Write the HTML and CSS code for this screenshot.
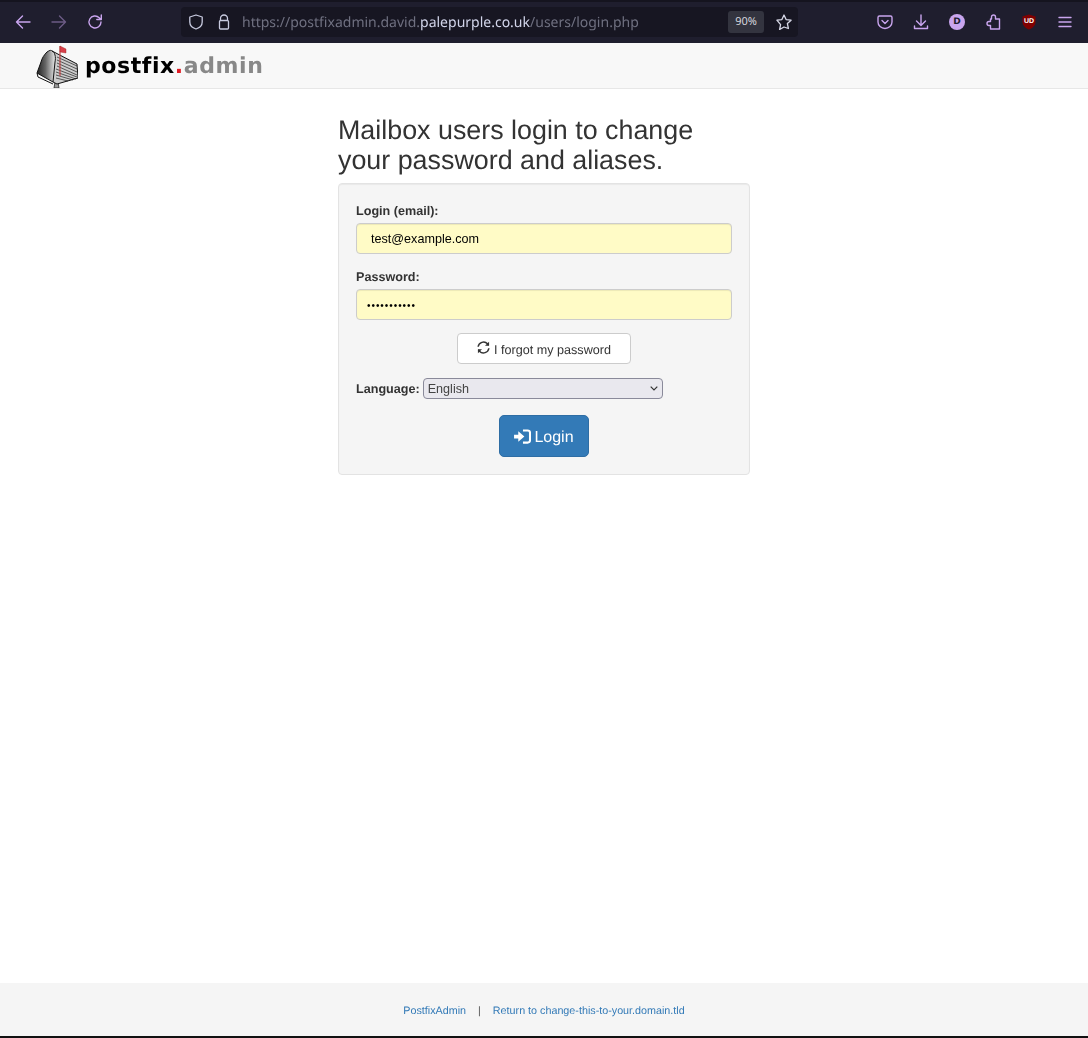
FILE: index.html
```html
<!DOCTYPE html>
<html lang="en">
<head>
<meta charset="utf-8">
<title>Postfix Admin</title>
<link rel="stylesheet" href="styles.css">
</head>
<body>
<header class="toolbar">
  <div class="nav-group">
    <svg class="tb-icon" viewBox="0 0 16 16"><path d="M15 8H1.500M7.500 2L1.500 8l6 6"/></svg>
    <svg class="tb-icon dim" viewBox="0 0 16 16"><path d="M1 8h13.500M8.500 2l6 6-6 6"/></svg>
    <svg class="tb-icon" viewBox="0 0 16 16"><path d="M14 8a6 6 0 1 1-1.800-4.300L14 5.500M14.300 1v4.500H9.800"/></svg>
  </div>
  <div class="urlbar">
    <svg class="url-icon" viewBox="0 0 16 16"><path d="M8 1l6.200 2v5c0 3.600-3 6-6.200 7-3.200-1-6.200-3.400-6.200-7V3z"/></svg>
    <svg class="url-icon lock" viewBox="0 0 16 16"><path d="M4.500 7V4.500a3.500 3.500 0 0 1 7 0V7M3.500 7.500a1 1 0 0 1 1-1h7a1 1 0 0 1 1 1V14a1 1 0 0 1-1 1h-7a1 1 0 0 1-1-1z"/></svg>
    <div class="url-text">https://postfixadmin.david.<span class="url-strong">palepurple.co.uk</span>/users/login.php</div>
    <span class="zoom">90%</span>
    <svg class="star" viewBox="0 0 16 16"><path d="M8 1l2.100 4.600 5 .6-3.700 3.400 1 4.900L8 13l-4.400 2.500 1-4.900L.9 6.200l5-.6z"/></svg>
  </div>
  <div class="ext-group">
    <svg class="tb-icon" viewBox="0 0 16 16"><path d="M2.500 2h11A1.500 1.500 0 0 1 15 3.500V8a7 6.500 0 0 1-14 0V3.500A1.500 1.500 0 0 1 2.500 2zM5 6.500l3 3 3-3"/></svg>
    <svg class="tb-icon" viewBox="0 0 16 16"><path d="M8 1v10M3.500 7L8 11.500 12.500 7M1.500 12v2.500h13V12"/></svg>
    <span class="avatar">D</span>
    <svg class="tb-icon" viewBox="0 0 16 16"><path d="M6.500 5V3a2 2 0 0 1 4 0V5H14.500V15H5.500V11.500H4a2 2 0 0 1 0-4H5.500V5z"/></svg>
    <span class="shield"><svg viewBox="0 0 16 16"><path class="shield-bg" d="M8 .5l6.500 2V8c0 3.500-3 6-6.500 7.500C4.500 14 1.500 11.500 1.500 8V2.500z"/></svg><span class="shield-text">UD</span></span>
    <svg class="tb-icon" viewBox="0 0 16 16"><path d="M2 3.500h12M2 8h12M2 12.500h12"/></svg>
  </div>
</header>

<nav class="navbar">
  <svg class="logo" viewBox="0 0 42 44">
    <defs>
      <linearGradient id="doorGrad" x1="0" y1="0" x2="1" y2="0">
        <stop offset="0" stop-color="#222"/>
        <stop offset=".45" stop-color="#666"/>
        <stop offset=".8" stop-color="#bbb"/>
        <stop offset="1" stop-color="#f4f4f4"/>
      </linearGradient>
    </defs>
    <path class="logo-post" d="M19 38h3l1 6h-5z"/>
    <path class="logo-body" d="M16 7L41 20l1 14-21 6-6-3z"/>
    <path class="logo-lines" d="M21 13l20 9M21 16l20 9M21 19l20 9M21 22l20 9M20 25l21 8M20 28l20 7M20 31l17 5M20 34l12 3"/>
    <path class="logo-door" d="M1 29L5 18c1-4 3-7 6-10 3-2 6-1 8 2 1 3 1 5 0 8l-2 20z"/>
    <path class="logo-outline" d="M1 29L5 18c1-4 3-7 6-10 3-2 4-2 5-1L41 20l1 14-21 6-4-2zM16 7c3 1 4 6 3 11l-2 20M1 29l1 4 15 7"/>
    <path class="logo-pole" d="M24 2v30"/>
    <path class="logo-flag" d="M24 2l6 3v4l-6-1z"/>
  </svg>
  <div class="brand">postfix<span class="brand-dot">.</span><span class="brand-admin">admin</span></div>
</nav>

<main class="content">
  <div class="login-col">
    <h2 class="title">Mailbox users login to change your password and aliases.</h2>
    <form class="well">
      <label class="label" for="email">Login (email):</label>
      <input class="field" id="email" type="text" value="test@example.com">
      <label class="label label-pw" for="pw">Password:</label>
      <input class="field field-pw" id="pw" type="password" value="password123">
      <div class="forgot-row">
        <a class="btn-forgot">
          <svg class="refresh" viewBox="0 0 14 14"><path d="M1.200 6.200A5.900 5.900 0 0 1 11.300 3l1.200 1.500M12.800 7.800A5.900 5.900 0 0 1 2.700 11L1.500 9.500"/><path class="refresh-head" d="M13 .8v4.400H8.600zM1 13.200V8.800h4.400z"/></svg>
          I forgot my password
        </a>
      </div>
      <div class="lang-row">
        <label class="label label-lang" for="lang">Language:</label>
        <span class="lang-wrap">
          <select class="lang" id="lang"><option>English</option></select>
          <svg class="chevron" viewBox="0 0 8 5"><path d="M.7.700L4 4l3.300-3.300"/></svg>
        </span>
      </div>
      <div class="login-row">
        <button class="btn-login" type="button">
          <svg class="login-icon" viewBox="0 0 18 16"><path class="li-arrow" d="M0 6h4.500V2.500L11 8l-6.500 5.500V10H0z"/><path class="li-door" d="M9.500 1.500h5a2.500 2.500 0 0 1 2.500 2.500v8a2.500 2.500 0 0 1-2.500 2.500h-5"/></svg>
          Login
        </button>
      </div>
    </form>
  </div>
</main>

<footer class="footer">
  <div class="foot-inner">
    <a class="foot-link">PostfixAdmin</a>
    <span class="foot-sep">|</span>
    <a class="foot-link">Return to change-this-to-your.domain.tld</a>
  </div>
</footer>
</body>
</html>
```
FILE: styles.css
```css
* { box-sizing: border-box; }
html, body { margin: 0; height: 100%; }
body {
  min-height: 1038px;
  display: flex;
  flex-direction: column;
  background: #fff;
  font-family: "Liberation Sans", Arial, sans-serif;
  color: #333;
  font-size: 12.6px;
  border-bottom: 2px solid #111;
  text-rendering: geometricPrecision;
}

/* browser chrome */
.toolbar {
  height: 43px;
  flex: none;
  display: flex;
  align-items: center;
  background: #1f1e2e;
  border-top: 2px solid #15141f;
  padding: 0 14px 1px 15px;
}
.nav-group { display: flex; gap: 20px; align-items: center; width: 166px; }
.tb-icon {
  width: 16px; height: 16px; flex: none;
  fill: none; stroke: #c9a5ee; stroke-width: 1.400;
  stroke-linecap: round; stroke-linejoin: round;
}
.dim { opacity: .45; }
.urlbar {
  width: 617px;
  height: 30px;
  display: flex;
  align-items: center;
  background: #171622;
  border-radius: 4px;
  padding: 0 6px 0 7px;
  font-family: "Noto Sans", sans-serif;
  font-size: 14px;
  color: #6f7080;
}
.url-icon {
  width: 16px; height: 16px; flex: none; margin-right: 12px;
  fill: none; stroke: #c8cbe0; stroke-width: 1.300; stroke-linejoin: round;
}
.lock { margin-right: 10px; }
.url-text { flex: 1; white-space: nowrap; transform: translateZ(0); }
.url-strong { color: #d2d5ea; }
.zoom {
  width: 36px; height: 22px; border-radius: 3px;
  background: #33343f; color: #d4d5dd;
  font-size: 11px; line-height: 22px; text-align: center;
  margin-right: 12px;
}
.star {
  width: 16px; height: 16px; flex: none;
  fill: none; stroke: #d8d9e8; stroke-width: 1.300; stroke-linejoin: round;
}
.ext-group {
  margin-left: 79px;
  display: flex; align-items: center; gap: 20px;
}
.avatar {
  width: 16px; height: 16px; border-radius: 50%;
  background: #c9a5ee; color: #1f1e2e;
  font: bold 9px/16px "DejaVu Sans", sans-serif; text-align: center;
}
.shield { position: relative; width: 16px; height: 16px; display: block; }
.shield svg { width: 16px; height: 16px; display: block; }
.shield-bg { fill: #800000; }
.shield-text {
  position: absolute; left: 0; right: 0; top: 4px;
  font: bold 7px/8px "Liberation Sans", sans-serif;
  color: #fff; text-align: center;
}

/* navbar */
.navbar {
  height: 46px;
  flex: none;
  display: flex;
  align-items: center;
  background: #f8f8f8;
  border-bottom: 1px solid #e7e7e7;
  padding-left: 36px;
}
.logo { width: 42px; height: 44px; flex: none; }
.logo-post { fill: #999; stroke: #222; stroke-width: .8; }
.logo-body { fill: #ccc; }
.logo-door { fill: url(#doorGrad); }
.logo-lines { fill: none; stroke: #555; stroke-width: 1; }
.logo-outline { fill: none; stroke: #111; stroke-width: 1; stroke-linejoin: round; }
.logo-pole { stroke: #b44; stroke-width: 1.200; }
.logo-flag { fill: #d8404a; stroke: #922; stroke-width: .4; }
.brand {
  margin-left: 7px;
  margin-top: 2px;
  font: bold 22px/30px "DejaVu Sans", sans-serif;
  letter-spacing: .58px;
  color: #000;
  white-space: nowrap;
  transform: translateZ(0);
}
.brand-dot { color: #e01b24; }
.brand-admin { color: #888; }

/* content */
.content { flex: 1; display: flex; justify-content: center; }
.login-col { width: 412px; padding-top: 26px; transform: translateZ(0); }
.title {
  margin: 0 0 8px;
  font-size: 26.850px;
  line-height: 30px;
  font-weight: 400;
  color: #333;
}
.well {
  height: 292px;
  background: #f5f5f5;
  border: 1px solid #e3e3e3;
  border-radius: 4px;
  box-shadow: inset 0 1px 1px rgba(0,0,0,.05);
  padding: 20px 17px 17px;
  display: flex;
  flex-direction: column;
}
.label { display: block; font-weight: bold; font-size: 12.600px; line-height: 14px; margin-bottom: 5px; }
.label-pw { margin-top: 16px; }
.field {
  display: block;
  width: 100%;
  height: 31px;
  flex: none;
  background: #fffbc6;
  border: 1px solid #ccc;
  border-radius: 4px;
  box-shadow: inset 0 1px 1px rgba(0,0,0,.075);
  padding: 1px 14px 0;
  font: 12.600px "Liberation Sans", Arial, sans-serif;
  color: #000;
}
.field-pw {
  padding-left: 10px;
  font-size: 10px;
  letter-spacing: .95px;
}
.forgot-row { display: flex; justify-content: center; margin-top: 13px; }
.btn-forgot {
  width: 174px; height: 31px;
  display: flex; align-items: center; justify-content: center; gap: 4px;
  padding-top: 2px;
  background: #fff; border: 1px solid #ccc; border-radius: 4px;
  font-size: 12.600px; color: #333;
}
.refresh {
  width: 13px; height: 13px; flex: none; margin-top: -4px;
  fill: none; stroke: #333; stroke-width: 1.600;
}
.refresh-head { fill: #333; stroke: none; }
.lang-row { display: flex; align-items: flex-start; margin-top: 14px; }
.label-lang { margin: 0 3px 0 0; line-height: 21px; padding-top: 1px; }
.lang-wrap { position: relative; display: block; width: 240px; height: 21px; }
.lang {
  appearance: none;
  display: block;
  width: 240px; height: 21px;
  background: #e9e8ee; border: 1px solid #8a8a9a; border-radius: 4px;
  font: 12.600px "Liberation Sans", Arial, sans-serif; color: #444;
  padding: 0 4px;
}
.chevron {
  position: absolute; right: 5px; top: 8px;
  width: 8px; height: 5px;
  fill: none; stroke: #333; stroke-width: 1.200;
}
.login-row { display: flex; justify-content: center; margin-top: 16px; }
.btn-login {
  width: 90px; height: 42px;
  margin-top: -1px;
  display: flex; align-items: center; justify-content: center; gap: 3px;
  background: #337ab7; border: 1px solid #2e6da4; border-radius: 5px;
  color: #fff; font: 16px "Liberation Sans", Arial, sans-serif; padding: 3px 0 0;
  text-rendering: geometricPrecision;
}
.login-icon { width: 17px; height: 15px; flex: none; margin-top: -3px; }
.li-arrow { fill: #fff; }
.li-door { fill: none; stroke: #fff; stroke-width: 2.200; }

/* footer */
.footer {
  height: 53px;
  flex: none;
  background: #f5f5f5;
  display: flex;
  align-items: center;
  justify-content: center;
  padding-top: 2px;
  font-size: 10.750px;
}
.foot-inner { display: flex; transform: translateZ(0); }
.foot-link { color: #337ab7; }
.foot-sep { margin: 0 12px; color: #555; }
```
